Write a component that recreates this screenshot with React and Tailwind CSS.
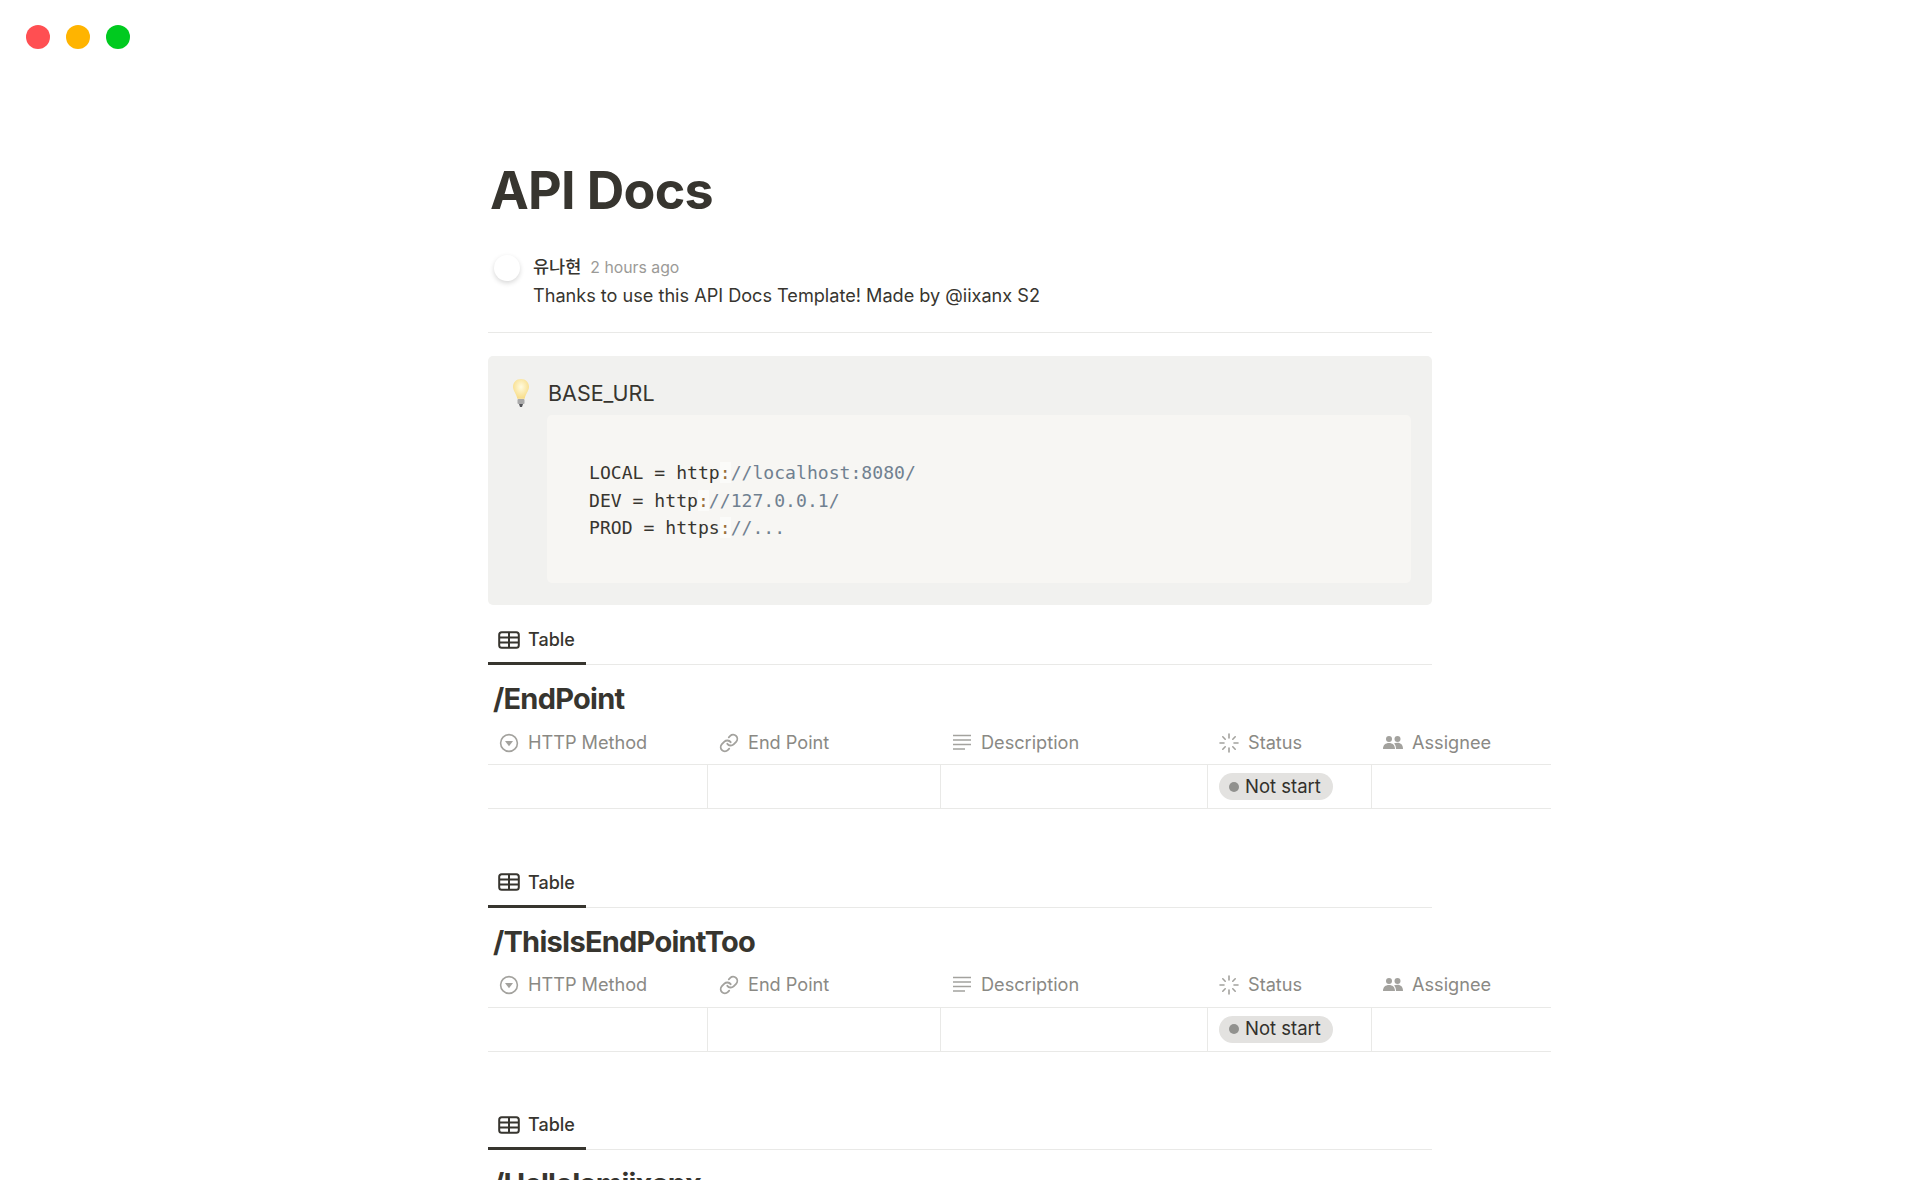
import React from "react";

function TableIcon() {
  return (
    <svg width="22" height="18" viewBox="0 0 22 18" fill="none" stroke="#37352f" strokeWidth="2">
      <rect x="1.2" y="1.2" width="19.6" height="15.6" rx="2.5" />
      <path d="M1.2 6.400h19.600M1.200 11.600h19.600M11 1.200v15.600" />
    </svg>
  );
}

function SelectIcon() {
  return (
    <svg width="20" height="20" viewBox="0 0 20 20" fill="none">
      <circle cx="10" cy="10" r="8.4" stroke="#a3a29e" strokeWidth="1.6" />
      <path d="M6 8h8l-4 5.2z" fill="#a3a29e" />
    </svg>
  );
}

function LinkIcon() {
  return (
    <svg width="20" height="20" viewBox="0 0 24 24" fill="none" stroke="#a3a29e" strokeWidth="2.2" strokeLinecap="round" strokeLinejoin="round">
      <path d="M10 13a5 5 0 0 0 7.54.54l3-3a5 5 0 0 0-7.07-7.07l-1.72 1.71" />
      <path d="M14 11a5 5 0 0 0-7.54-.54l-3 3a5 5 0 0 0 7.07 7.07l1.71-1.71" />
    </svg>
  );
}

function TextIcon() {
  return (
    <svg width="20" height="18" viewBox="0 0 20 18" fill="none" stroke="#a3a29e" strokeWidth="1.5">
      <path d="M1 1.500h18M1 6h18M1 10.500h18M1 15h12" />
    </svg>
  );
}

function StatusIcon() {
  return (
    <svg width="20" height="20" viewBox="0 0 20 20" fill="none" stroke="#a3a29e" strokeWidth="1.6" strokeLinecap="round">
      <path d="M10 1v4M10 15v4M1 10h4M15 10h4M3.800 3.800l2.400 2.400M13.800 13.800l2.400 2.400M16.200 3.800l-2.400 2.400M6.200 13.800l-2.400 2.400" />
    </svg>
  );
}

function PeopleIcon() {
  return (
    <svg width="20" height="16" viewBox="0 0 20 16" fill="#a3a29e">
      <circle cx="6" cy="4" r="3" />
      <circle cx="14.500" cy="4" r="3" />
      <path d="M0 14c0-4 2.500-6 6-6s6 2 6 6zM13 14c0-2.300-.6-4.200-2-5.500 1-.5 2.200-.7 3.500-.7 3.300 0 5.500 2.200 5.500 6.200z" />
    </svg>
  );
}

function Bulb() {
  return (
    <svg width="18" height="30" viewBox="0 0 18 30">
      <defs>
        <radialGradient id="bulbGlow" cx="50%" cy="40%" r="60%">
          <stop offset="0%" stopColor="#fffbe0" />
          <stop offset="100%" stopColor="#f8dc85" />
        </radialGradient>
      </defs>
      <path d="M9 1C4.300 1 1 4.500 1 8.800c0 4.200 3.300 6.500 4.300 12h7.400c1-5.500 4.300-7.800 4.300-12C17 4.500 13.700 1 9 1z" fill="url(#bulbGlow)" />
      <rect x="5.500" y="21" width="7" height="5" rx="1" fill="#a9a9a9" />
      <path d="M7 26h4l-1 3H8z" fill="#55565a" />
    </svg>
  );
}

function CodeLine({ head, rest }) {
  return (
    <div>
      {head}
      <span className="text-[#9a6e3a] bg-white/50">:</span>
      <span className="text-[#708090]">{rest}</span>
    </div>
  );
}

function Database({ title }) {
  const colHead = "flex items-center gap-[9px] h-full pl-[11px] pt-[2px]";
  return (
    <div>
      <div className="h-[60px] w-[944px] border-b border-[#e9e9e7] flex items-end">
        <div className="w-[98px] h-[52px] pl-[11px] pt-[4px] flex items-center gap-[8px] text-[18px] font-medium text-[#37352f] border-b-[3px] border-[#37352f] -mb-px">
          <span className="-ml-[1px]"><TableIcon /></span>
          <span>Table</span>
        </div>
      </div>
      <h2 className="mt-[16px] ml-[5px] h-[38px] leading-[36px] text-[29px] font-bold tracking-[-0.75px] text-[#37352f]">{title}</h2>
      <div className="w-[1063px] grid grid-cols-[220px_233px_267px_164px_179px] h-[46px] text-[18.150px] text-[#8a8984] border-b border-[#e9e9e7]">
        <div className={colHead}><SelectIcon /><span>HTTP Method</span></div>
        <div className={colHead}><LinkIcon /><span>End Point</span></div>
        <div className={colHead}><TextIcon /><span>Description</span></div>
        <div className={colHead}><StatusIcon /><span>Status</span></div>
        <div className={colHead}><PeopleIcon /><span>Assignee</span></div>
      </div>
      <div className="w-[1063px] grid grid-cols-[220px_233px_267px_164px_179px] h-[44px] border-b border-[#e9e9e7]">
        <div className="border-r border-[#e9e9e7]" />
        <div className="border-r border-[#e9e9e7]" />
        <div className="border-r border-[#e9e9e7]" />
        <div className="border-r border-[#e9e9e7] pl-[11px] flex items-center">
          <div className="h-[27px] pl-[10px] pr-[12px] rounded-full bg-[#e3e2e0] flex items-center gap-[6px] text-[18.500px] text-[#32302c]">
            <span className="w-[10px] h-[10px] rounded-full bg-[#91918e]" />
            <span>Not start</span>
          </div>
        </div>
        <div />
      </div>
    </div>
  );
}

export default function App() {
  return (
    <div className="h-[1200px] bg-white overflow-hidden font-['Inter','Noto_Sans_CJK_KR',sans-serif]">
      <div className="h-[1180px] overflow-hidden relative">
        <div className="absolute left-[26px] top-[25px] flex gap-[16px]">
          <span className="w-[24px] h-[24px] rounded-full bg-[#ff4f52]" />
          <span className="w-[24px] h-[24px] rounded-full bg-[#ffb400]" />
          <span className="w-[24px] h-[24px] rounded-full bg-[#00ca1f]" />
        </div>
        <div className="ml-[488px] pt-[158px]">
          <h1 className="ml-[2px] h-[66px] leading-[66px] text-[52px] font-bold tracking-[-0.7px] text-[#37352f]">API Docs</h1>
          <div className="w-[944px] mt-[28px] h-[81px] border-b border-[#e9e9e7] flex">
            <div className="ml-[6px] mt-[3px] w-[26px] h-[26px] rounded-full bg-white shadow-[0_2px_5px_rgba(0,0,0,0.16)]" />
            <div className="ml-[13px]">
              <div className="flex items-baseline gap-[9px] h-[28px] leading-[30px]">
                <span className="text-[17.500px] font-medium text-[#37352f]">유나현</span>
                <span className="text-[15.800px] text-[#9b9a97]">2 hours ago</span>
              </div>
              <div className="text-[18.130px] h-[28px] leading-[30px] text-[#37352f]">Thanks to use this API Docs Template! Made by @iixanx S2</div>
            </div>
          </div>
          <div className="w-[944px] mt-[23px] h-[249px] bg-[#f1f1ef] rounded-[5px] pl-[24px] pr-[21px] pt-[22px] flex gap-[17px]">
            <div className="w-[18px] shrink-0"><Bulb /></div>
            <div className="flex-1">
              <div className="h-[30px] ml-[1px] leading-[31px] text-[21.500px] text-[#37352f]">BASE_URL</div>
              <div className="h-[168px] mt-[7px] bg-[#f7f6f3] rounded-[5px] pl-[42px] pt-[44px] font-['DejaVu_Sans_Mono',monospace] text-[18.100px] leading-[27.500px] text-[#37352f]">
                <CodeLine head="LOCAL = http" rest="//localhost:8080/" />
                <CodeLine head="DEV = http" rest="//127.0.0.1/" />
                <CodeLine head="PROD = https" rest="//..." />
              </div>
            </div>
          </div>
          <div className="flex flex-col gap-[38.500px]">
            <Database title="/EndPoint" />
            <Database title="/ThisIsEndPointToo" />
            <Database title="/HelloIamiixanx" />
          </div>
        </div>
      </div>
    </div>
  );
}
